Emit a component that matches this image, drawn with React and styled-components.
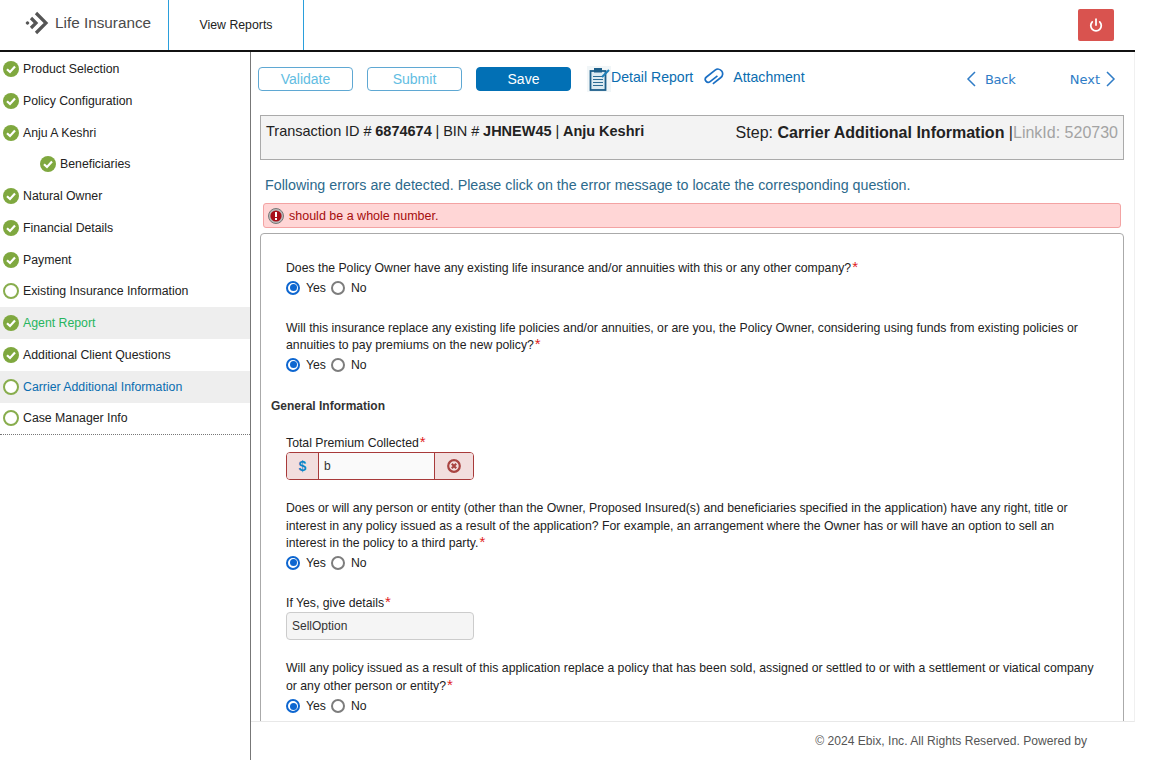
import React from "react";
import styled, { createGlobalStyle } from "styled-components";
import { Power } from "lucide-react";

const GlobalStyle = createGlobalStyle`
  html, body {
    margin: 0;
    padding: 0;
    background: #fff;
    overflow: hidden;
  }
  * {
    box-sizing: border-box;
  }
  body {
    font-family: "Liberation Sans", Arial, sans-serif;
    color: #222;
  }
`;

const Page = styled.div`
  width: 1135px;
  height: 760px;
  display: flex;
  flex-direction: column;
  overflow: hidden;
`;

const Header = styled.header`
  height: 52px;
  flex: none;
  display: flex;
  align-items: stretch;
  border-bottom: 2px solid #111;
`;

const Brand = styled.div`
  width: 168px;
  display: flex;
  align-items: center;
  padding: 0 0 4px 25px;
  gap: 6px;
  font-size: 15.3px;
  color: #4a4a4a;
`;

const HeaderTab = styled.div`
  width: 136px;
  border-left: 1px solid #2a9fdc;
  border-right: 1px solid #2a9fdc;
  display: flex;
  align-items: center;
  justify-content: center;
  font-size: 12.3px;
  color: #222;
`;

const HeaderEnd = styled.div`
  flex: 1;
  display: flex;
  justify-content: flex-end;
  padding: 9px 21px 0 0;
`;

const PowerButton = styled.button`
  width: 36px;
  height: 32px;
  border: none;
  border-radius: 2px;
  background: #d9534f;
  color: #fff;
  display: flex;
  align-items: center;
  justify-content: center;
  padding: 0;
`;

const Body = styled.div`
  flex: 1;
  min-height: 0;
  display: flex;
`;

const Sidebar = styled.nav`
  width: 251px;
  flex: none;
  border-right: 1px solid #777;
`;

const StepList = styled.div`
  border-bottom: 1px dotted #777;
  height: 383px;
  padding-top: 1.3px;
`;

const Step = styled.div`
  height: 31.75px;
  display: flex;
  align-items: center;
  gap: 4px;
  padding-left: ${({ $nested }) => ($nested ? "40px" : "3px")};
  font-size: 12.3px;
  color: ${({ $tone }) =>
    $tone === "green" ? "#27b560" : $tone === "blue" ? "#0a6db0" : "#222"};
  background: ${({ $tone }) => ($tone ? "#eeeeee" : "transparent")};
`;

const Ring = styled.span`
  width: 16px;
  height: 16px;
  flex: none;
  border-radius: 50%;
  border: 2.7px solid #88ad4d;
  background: #fff;
`;

const Main = styled.main`
  flex: 1;
  min-width: 0;
  display: flex;
  flex-direction: column;
`;

const Scroll = styled.div`
  height: 670px;
  flex: none;
  overflow: hidden;
  border-right: 1px solid #f0f0f0;
  border-bottom: 1px solid #e8e8e8;
  padding: 14px 10px 0 9px;
`;

const Toolbar = styled.div`
  height: 26px;
  display: flex;
  align-items: center;
  margin-left: -2px;
`;

const ActionButton = styled.button`
  width: 95px;
  height: 24px;
  margin-right: 14px;
  border-radius: 4px;
  font-family: inherit;
  font-size: 14px;
  padding: 0;
  border: 1px solid ${({ $solid }) => ($solid ? "#0270b5" : "#5fa8d3")};
  background: ${({ $solid }) => ($solid ? "#0270b5" : "#fff")};
  color: ${({ $solid }) => ($solid ? "#fff" : "#62bde2")};
`;

const ToolLink = styled.a`
  display: flex;
  align-items: center;
  color: #0a6db0;
  font-size: 14.1px;
`;

const ReportLink = styled(ToolLink)`
  margin-left: 2px;
  span {
    margin-bottom: 4px;
  }
`;

const AttachLink = styled(ToolLink)`
  margin-left: 10px;
  gap: 8px;
  margin-bottom: 4px;
`;

const Pager = styled.div`
  margin-left: auto;
  display: flex;
  align-items: center;
  width: 150px;
  justify-content: space-between;
  margin-right: 8px;
`;

const PageLink = styled.a`
  display: flex;
  align-items: center;
  gap: ${({ $gap }) => $gap}px;
  font-family: "DejaVu Sans", sans-serif;
  font-size: 13px;
  letter-spacing: ${({ $tight }) => ($tight ? "-0.3px" : "0")};
  color: #2f7cc6;
`;

const InfoBox = styled.div`
  height: 45px;
  margin-top: 23px;
  border: 1px solid #aaa;
  background: #f3f3f3;
  padding: 7px 5px 0;
  display: flex;
  justify-content: space-between;
  font-size: 14.5px;
  color: #222;
`;

const TransactionInfo = styled.div`
  word-spacing: -0.2px;
`;

const StepInfo = styled.div`
  font-size: 16px;
  padding-top: 1px;
`;

const Muted = styled.span`
  color: #a3a3a3;
`;

const ErrorIntro = styled.div`
  margin: 17px 0 0 5px;
  height: 17px;
  line-height: 17px;
  font-size: 14.27px;
  color: #2d6a8c;
`;

const ErrorBar = styled.div`
  height: 25px;
  margin: 9px 3px 0 3px;
  border: 1px solid #f3a3a3;
  border-radius: 3px;
  background: #ffd6d6;
  display: flex;
  align-items: center;
  gap: 5px;
  padding-left: 4px;
  font-size: 12.5px;
  color: #a50d0d;
`;

const Panel = styled.section`
  margin-top: 5px;
  height: 600px;
  border: 1px solid #aaa;
  border-radius: 4px;
  padding: 26px 25px 0;
`;

const Question = styled.div`
  font-size: 12.25px;
  line-height: 17.5px;
  color: #222;
  max-width: 810px;
  margin-top: ${({ $gap }) => $gap ?? 0}px;
`;

const Star = styled.span`
  color: #e11d1d;
  font-size: 15px;
  line-height: 10px;
  margin-left: 1px;
`;

const RadioRow = styled.div`
  display: flex;
  align-items: center;
  height: 16px;
  margin-top: ${({ $gap }) => $gap}px;
  font-size: 12.25px;
`;

const Radio = styled.span`
  width: 14px;
  height: 14px;
  border-radius: 50%;
  flex: none;
  margin-right: 6px;
  border: 2px solid ${({ $on }) => ($on ? "#0d66d0" : "#7d7d7d")};
  background: #fff;
  display: flex;
  align-items: center;
  justify-content: center;
  &::after {
    content: "";
    width: 7px;
    height: 7px;
    border-radius: 50%;
    background: ${({ $on }) => ($on ? "#0d66d0" : "transparent")};
  }
`;

const RadioLabel = styled.span`
  margin-right: 5px;
`;

const SectionTitle = styled.div`
  margin: 25px 0 0 -15px;
  font-size: 12px;
  font-weight: 700;
  line-height: 17px;
  color: #333;
`;

const InputGroup = styled.div`
  width: 188px;
  height: 28px;
  display: flex;
  border: 1px solid #a83a3a;
  border-radius: 4px;
  overflow: hidden;
  font-size: 12px;
`;

const Addon = styled.span`
  width: ${({ $w }) => $w}px;
  flex: none;
  background: #f2dede;
  display: flex;
  align-items: center;
  justify-content: center;
  color: #0a84c6;
  font-size: 14px;
  font-weight: 700;
  padding-bottom: 1px;
`;

const ErrorValue = styled.span`
  flex: 1;
  background: #fafafa;
  border-left: 1px solid #a83a3a;
  border-right: 1px solid #a83a3a;
  padding-left: 5px;
  display: flex;
  align-items: center;
  color: #333;
`;

const ReadonlyInput = styled.div`
  width: 188px;
  height: 28px;
  border: 1px solid #ccc;
  border-radius: 4px;
  background: #f5f5f5;
  display: flex;
  align-items: center;
  padding-left: 5px;
  font-size: 12px;
  color: #333;
`;

const Footer = styled.footer`
  flex: 1;
  padding: 12px 48px 0 0;
  text-align: right;
  font-size: 12.1px;
  color: #555;
`;

const steps = [
  { label: "Product Selection", done: true },
  { label: "Policy Configuration", done: true },
  { label: "Anju A Keshri", done: true },
  { label: "Beneficiaries", done: true, nested: true },
  { label: "Natural Owner", done: true },
  { label: "Financial Details", done: true },
  { label: "Payment", done: true },
  { label: "Existing Insurance Information" },
  { label: "Agent Report", done: true, tone: "green" },
  { label: "Additional Client Questions", done: true },
  { label: "Carrier Additional Information", tone: "blue" },
  { label: "Case Manager Info" },
];

const Logo = () => (
  <svg width="24" height="24" viewBox="0 0 24 24" fill="none" stroke="#555" strokeWidth="3.2">
    <circle cx="2.5" cy="12" r="1.3" fill="#555" strokeWidth="1" />
    <path d="M6 7 11 12 6 17" />
    <path d="M11 2 21 12 11 22" />
  </svg>
);

const CheckCircle = () => (
  <svg width="16" height="16" viewBox="0 0 16 16" style={{ flex: "none" }}>
    <circle cx="8" cy="8" r="8" fill="#7fa83f" />
    <path d="M4 8.2 7 11 12 5.6" fill="none" stroke="#fff" strokeWidth="2.2" />
  </svg>
);

const ClipboardIcon = () => (
  <svg width="24" height="26" viewBox="0 0 24 26">
    <rect x="0" y="0" width="24" height="26" fill="#f1f6f8" />
    <rect x="3.5" y="5" width="15" height="19" fill="#dcebf2" stroke="#1d5f8a" strokeWidth="1.8" />
    <rect x="7" y="2" width="8" height="4.5" fill="#1d5f8a" />
    <path d="M6 10.5h10M6 13.5h10M6 16.5h10M6 19.5h10" stroke="#2c6c94" strokeWidth="1.2" />
    <path d="M15 11 22 4" stroke="#1d7fb8" strokeWidth="2" />
  </svg>
);

const ClipIcon = () => (
  <svg width="22" height="22" viewBox="-1 -3 26 26" fill="none" stroke="#1a6fc4" strokeWidth="2">
    <path
      transform="rotate(-38 12 10)"
      d="M6 15.5H18a5.5 5.5 0 0 0 0-11H5a3.5 3.5 0 0 0 0 7H16"
    />
  </svg>
);

const BackChevron = () => (
  <svg width="10" height="16" viewBox="0 0 10 16" fill="none" stroke="currentColor" strokeWidth="1.5">
    <path d="M9 1 2 8 9 15" />
  </svg>
);

const NextChevron = () => (
  <svg width="10" height="16" viewBox="0 0 10 16" fill="none" stroke="currentColor" strokeWidth="1.5">
    <path d="M1 1 8 8 1 15" />
  </svg>
);

const ErrorIcon = () => (
  <svg width="16" height="16" viewBox="0 0 16 16" style={{ flex: "none" }}>
    <circle cx="8" cy="8" r="7.5" fill="#bbb" stroke="#777" strokeWidth="1" />
    <circle cx="8" cy="8" r="5.6" fill="#a8101a" />
    <rect x="7" y="4" width="2" height="5" fill="#fff" />
    <rect x="7" y="10" width="2" height="2" fill="#fff" />
  </svg>
);

const ClearIcon = () => (
  <svg width="14" height="14" viewBox="0 0 14 14">
    <circle cx="7" cy="7" r="5.8" fill="none" stroke="#a94442" strokeWidth="2.2" />
    <path d="M4.8 4.8 9.2 9.2M9.2 4.8 4.8 9.2" stroke="#a94442" strokeWidth="2.2" />
  </svg>
);

const YesNo = ({ gap = 2 }) => (
  <RadioRow $gap={gap}>
    <Radio $on />
    <RadioLabel>Yes</RadioLabel>
    <Radio />
    <RadioLabel>No</RadioLabel>
  </RadioRow>
);

const Required = () => <Star>*</Star>;

const App = () => (
  <>
    <GlobalStyle />
    <Page>
      <Header>
        <Brand>
          <Logo />
          Life Insurance
        </Brand>
        <HeaderTab>View Reports</HeaderTab>
        <HeaderEnd>
          <PowerButton>
            <Power size={14} strokeWidth={3} />
          </PowerButton>
        </HeaderEnd>
      </Header>
      <Body>
        <Sidebar>
          <StepList>
            {steps.map((step) => (
              <Step key={step.label} $nested={step.nested} $tone={step.tone}>
                {step.done ? <CheckCircle /> : <Ring />}
                {step.label}
              </Step>
            ))}
          </StepList>
        </Sidebar>
        <Main>
          <Scroll>
            <Toolbar>
              <ActionButton>Validate</ActionButton>
              <ActionButton>Submit</ActionButton>
              <ActionButton $solid>Save</ActionButton>
              <ReportLink>
                <ClipboardIcon />
                <span>Detail Report</span>
              </ReportLink>
              <AttachLink>
                <ClipIcon />
                Attachment
              </AttachLink>
              <Pager>
                <PageLink $gap={9} $tight>
                  <BackChevron />
                  Back
                </PageLink>
                <PageLink $gap={6}>
                  Next
                  <NextChevron />
                </PageLink>
              </Pager>
            </Toolbar>
            <InfoBox>
              <TransactionInfo>
                Transaction ID # <b>6874674</b> | BIN # <b>JHNEW45</b> | <b>Anju Keshri</b>
              </TransactionInfo>
              <StepInfo>
                Step: <b>Carrier Additional Information</b> |<Muted>LinkId: 520730</Muted>
              </StepInfo>
            </InfoBox>
            <ErrorIntro>
              Following errors are detected. Please click on the error message to locate the
              corresponding question.
            </ErrorIntro>
            <ErrorBar>
              <ErrorIcon />
              should be a whole number.
            </ErrorBar>
            <Panel>
              <Question>
                Does the Policy Owner have any existing life insurance and/or annuities with this
                or any other company?
                <Required />
              </Question>
              <YesNo />
              <Question $gap={24}>
                Will this insurance replace any existing life policies and/or annuities, or are
                you, the Policy Owner, considering using funds from existing policies or annuities
                to pay premiums on the new policy?
                <Required />
              </Question>
              <YesNo />
              <SectionTitle>General Information</SectionTitle>
              <Question $gap={20}>
                Total Premium Collected
                <Required />
              </Question>
              <InputGroup>
                <Addon $w={31}>$</Addon>
                <ErrorValue>b</ErrorValue>
                <Addon $w={38}>
                  <ClearIcon />
                </Addon>
              </InputGroup>
              <Question $gap={20}>
                Does or will any person or entity (other than the Owner, Proposed Insured(s) and
                beneficiaries specified in the application) have any right, title or interest in
                any policy issued as a result of the application? For example, an arrangement where
                the Owner has or will have an option to sell an interest in the policy to a third
                party.
                <Required />
              </Question>
              <YesNo />
              <Question $gap={24}>
                If Yes, give details
                <Required />
              </Question>
              <ReadonlyInput>SellOption</ReadonlyInput>
              <Question $gap={20}>
                Will any policy issued as a result of this application replace a policy that has
                been sold, assigned or settled to or with a settlement or viatical company or any
                other person or entity?
                <Required />
              </Question>
              <YesNo gap={3} />
            </Panel>
          </Scroll>
          <Footer>© 2024 Ebix, Inc. All Rights Reserved. Powered by</Footer>
        </Main>
      </Body>
    </Page>
  </>
);

export default App;
